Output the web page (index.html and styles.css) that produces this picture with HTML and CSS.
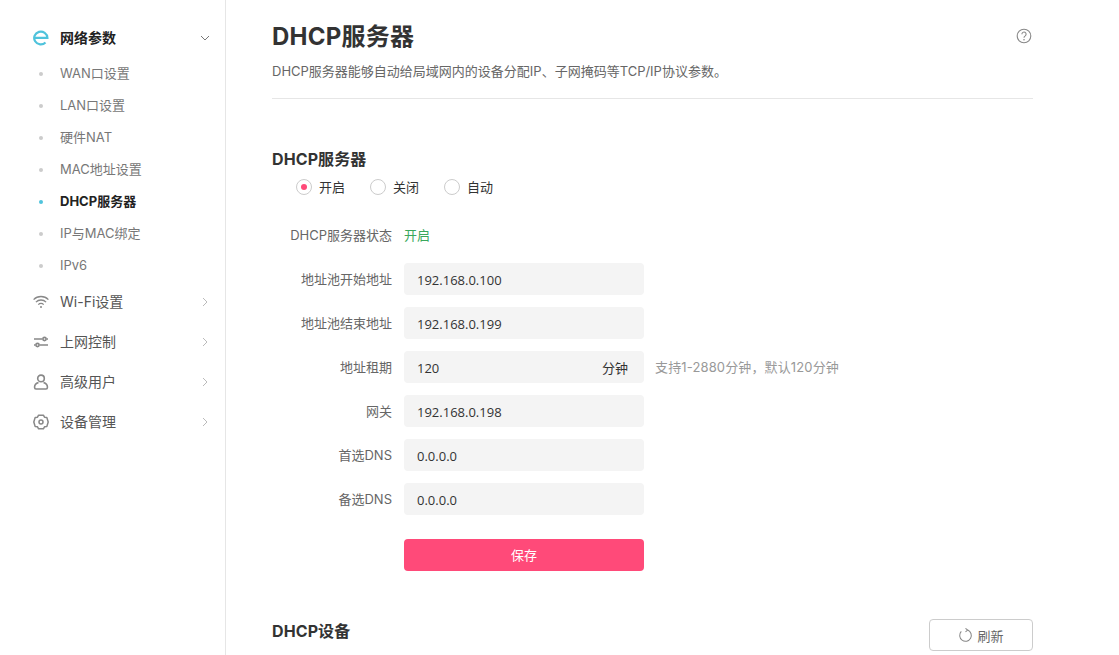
FILE: index.html
```html
<!DOCTYPE html>
<html lang="zh-CN">
<head>
    <meta charset="UTF-8">
    <title>DHCP服务器</title>
    <link rel="stylesheet" href="styles.css">
</head>
<body>
    <div class="sidebar">
        <div class="menu-item active">
            <svg class="menu-icon" viewBox="0 0 16 16" fill="none" stroke="#4fc3dc" stroke-width="2.2"><path d="M1.4 7.8h13a6.6 6.4 0 1 0-1.9 4.7"/></svg>
            <span class="menu-text">网络参数</span>
            <svg class="arrow" viewBox="0 0 10 10" fill="none" stroke="#777" stroke-width="1"><path d="M1 3l4 4 4-4"/></svg>
        </div>
        <div class="sub-item">WAN口设置</div>
        <div class="sub-item">LAN口设置</div>
        <div class="sub-item">硬件NAT</div>
        <div class="sub-item">MAC地址设置</div>
        <div class="sub-item current">DHCP服务器</div>
        <div class="sub-item">IP与MAC绑定</div>
        <div class="sub-item">IPv6</div>
        <div class="menu-item">
            <svg class="menu-icon" viewBox="0 0 16 16" fill="none" stroke="#888" stroke-width="1.3"><path d="M.6 5.6a10.4 10.4 0 0 1 14.8 0M2.9 8.1a7.2 7.2 0 0 1 10.2 0M5.3 10.6a3.8 3.8 0 0 1 5.4 0"/><circle cx="8" cy="13" r="1" fill="#888" stroke="none"/></svg>
            <span class="menu-text">Wi-Fi设置</span>
            <svg class="arrow" viewBox="0 0 10 10" fill="none" stroke="#bbb" stroke-width="1"><path d="M3 1l4 4-4 4"/></svg>
        </div>
        <div class="menu-item">
            <svg class="menu-icon" viewBox="0 0 16 16" fill="none" stroke="#888" stroke-width="1.6"><path d="M1 5h8.5M13.5 5H15M1 11h1.5M6.5 11H15"/><circle cx="11.5" cy="5" r="1.6"/><circle cx="4.5" cy="11" r="1.6"/></svg>
            <span class="menu-text">上网控制</span>
            <svg class="arrow" viewBox="0 0 10 10" fill="none" stroke="#bbb" stroke-width="1"><path d="M3 1l4 4-4 4"/></svg>
        </div>
        <div class="menu-item">
            <svg class="menu-icon" viewBox="0 0 16 16" fill="none" stroke="#888" stroke-width="1.6"><circle cx="8" cy="4.4" r="3.3"/><path d="M5.5 8.4C3 9.2 1.6 10.6 1.6 12.8v.8c0 .9.5 1.4 1.4 1.4h10c.9 0 1.4-.5 1.4-1.4v-.8c0-2.2-1.4-3.6-3.9-4.4"/></svg>
            <span class="menu-text">高级用户</span>
            <svg class="arrow" viewBox="0 0 10 10" fill="none" stroke="#bbb" stroke-width="1"><path d="M3 1l4 4-4 4"/></svg>
        </div>
        <div class="menu-item">
            <svg class="menu-icon" viewBox="0 0 16 16" fill="none" stroke="#888" stroke-width="1.5"><path d="M5.6 1.2h4.8l1.1 2 2.3.2 1.4 4.6-1.4 4.6-2.3.2-1.1 2H5.6l-1.1-2-2.3-.2L.8 8l1.4-4.6 2.3-.2z" stroke-linejoin="round"/><circle cx="8" cy="8" r="2"/></svg>
            <span class="menu-text">设备管理</span>
            <svg class="arrow" viewBox="0 0 10 10" fill="none" stroke="#bbb" stroke-width="1"><path d="M3 1l4 4-4 4"/></svg>
        </div>
    </div>

    <div class="main">
        <div class="page-head">
            <div class="page-title">
                <h1>DHCP服务器</h1>
                <svg class="help" viewBox="0 0 16 16" fill="none" stroke="#888" stroke-width="1.1"><circle cx="8" cy="8" r="6.8"/><path d="M5.9 6.2a2.1 2.1 0 1 1 3.3 1.7c-.8.5-1.2 1-1.2 1.8"/><circle cx="8" cy="11.7" r=".8" fill="#888" stroke="none"/></svg>
            </div>
            <p>DHCP服务器能够自动给局域网内的设备分配IP、子网掩码等TCP/IP协议参数。</p>
        </div>

        <h2 class="section-title">DHCP服务器</h2>
        <div class="radios">
            <div class="radio checked"><i></i><span>开启</span></div>
            <div class="radio"><i></i><span>关闭</span></div>
            <div class="radio"><i></i><span>自动</span></div>
        </div>

        <div class="form">
            <div class="row">
                <label>DHCP服务器状态</label>
                <span class="status">开启</span>
            </div>
            <div class="row">
                <label>地址池开始地址</label>
                <div class="field">192.168.0.100</div>
            </div>
            <div class="row">
                <label>地址池结束地址</label>
                <div class="field">192.168.0.199</div>
            </div>
            <div class="row">
                <label>地址租期</label>
                <div class="field">120<span class="unit">分钟</span></div>
                <span class="hint">支持1-2880分钟，默认120分钟</span>
            </div>
            <div class="row">
                <label>网关</label>
                <div class="field">192.168.0.198</div>
            </div>
            <div class="row">
                <label>首选DNS</label>
                <div class="field">0.0.0.0</div>
            </div>
            <div class="row">
                <label>备选DNS</label>
                <div class="field">0.0.0.0</div>
            </div>
            <div class="row save-row">
                <button class="save">保存</button>
            </div>
        </div>

        <div class="device-head">
            <h2 class="section-title">DHCP设备</h2>
            <button class="refresh">
                <svg viewBox="0 0 16 16" fill="none" stroke="#888" stroke-width="1.1"><path d="M10.3 2.2A6.2 6.2 0 1 1 3.5 3.7"/><path d="M8 .4l2.3 1.8L8 4.2"/></svg>
                刷新
            </button>
        </div>
    </div>
</body>
</html>
```

FILE: styles.css
```css
* {
    margin: 0;
    padding: 0;
    box-sizing: border-box;
}

html, body {
    height: 655px;
    overflow: hidden;
}

body {
    font-family: Inter, "Noto Sans CJK SC", sans-serif;
    font-size: 13px;
    color: #333;
    background: #fff;
    display: flex;
}

.sidebar {
    width: 226px;
    height: 655px;
    padding: 18px 14px 0 33px;
    border-right: 1px solid #e6e6e6;
    flex-shrink: 0;
}

.menu-item {
    height: 40px;
    display: flex;
    align-items: center;
    color: #555;
    font-size: 14px;
}

.menu-item.active {
    color: #222;
    font-weight: 700;
}

.menu-icon {
    width: 16px;
    height: 16px;
    margin-right: 11px;
}

.menu-text {
    flex: 1;
    padding-bottom: 2px;
}

.arrow {
    width: 10px;
    height: 10px;
    margin-right: 1px;
}

.sub-item {
    height: 32px;
    line-height: 31px;
    padding-left: 27px;
    color: #777;
    position: relative;
}

.sub-item::before {
    content: "";
    position: absolute;
    left: 6px;
    top: 14px;
    width: 4px;
    height: 4px;
    border-radius: 50%;
    background: #ccc;
}

.sub-item.current {
    color: #222;
    font-weight: 700;
}

.sub-item.current::before {
    background: #4fc3dc;
}

.main {
    width: 807px;
    padding: 0 0 0 46px;
}

.page-head {
    height: 99px;
    padding-top: 19px;
    border-bottom: 1px solid #e6e6e6;
}

.page-title {
    display: flex;
    justify-content: space-between;
    align-items: center;
    height: 36px;
}

.page-title h1 {
    font-size: 24px;
    line-height: 36px;
    letter-spacing: .25px;
    color: #333;
}

.help {
    width: 16px;
    height: 16px;
    margin-right: 1px;
    margin-bottom: 2px;
}

.page-head p {
    margin-top: 6px;
    line-height: 20px;
    color: #666;
}

.section-title {
    font-size: 16px;
    line-height: 24px;
    font-weight: 700;
    letter-spacing: .1px;
    color: #333;
}

.main > .section-title {
    margin-top: 48px;
}

.radios {
    display: flex;
    height: 32px;
    padding-left: 24px;
}

.radio {
    width: 74px;
    display: flex;
    align-items: center;
    color: #333;
}

.radio span {
    padding-bottom: 2px;
}

.radio i {
    width: 16px;
    height: 16px;
    margin-right: 7px;
    border: 1px solid #ccc;
    border-radius: 50%;
    display: flex;
    align-items: center;
    justify-content: center;
}

.radio.checked i::after {
    content: "";
    width: 6px;
    height: 6px;
    border-radius: 50%;
    background: #ff4a79;
}

.form {
    margin-top: 16px;
}

.row {
    display: flex;
    align-items: center;
    height: 32px;
    margin-bottom: 12px;
}

.row label {
    width: 120px;
    margin-right: 12px;
    padding-bottom: 2px;
    text-align: right;
    color: #666;
}

.status {
    padding-bottom: 2px;
    color: #3aa75c;
}

.field {
    width: 240px;
    height: 32px;
    line-height: 34px;
    padding: 0 16px 0 13px;
    background: #f4f4f4;
    border-radius: 4px;
    font-family: "Open Sans", "Noto Sans CJK SC", sans-serif;
    color: #333;
    display: flex;
    justify-content: space-between;
}

.hint {
    margin-left: 11px;
    padding-bottom: 2px;
    letter-spacing: .14px;
    color: #999;
}

.save-row {
    margin-top: 24px;
    padding-left: 132px;
}

.save {
    width: 240px;
    height: 32px;
    padding-bottom: 2px;
    border: none;
    border-radius: 4px;
    background: #ff4a79;
    color: #fff;
    font: inherit;
}

.device-head {
    display: flex;
    justify-content: space-between;
    align-items: flex-start;
    margin-top: 48px;
}

.refresh {
    width: 104px;
    height: 32px;
    border: 1px solid #ccc;
    border-radius: 4px;
    background: #fff;
    color: #666;
    font: inherit;
    display: flex;
    align-items: center;
    justify-content: center;
}

.refresh svg {
    width: 15px;
    height: 15px;
    margin-right: 4px;
}
```
